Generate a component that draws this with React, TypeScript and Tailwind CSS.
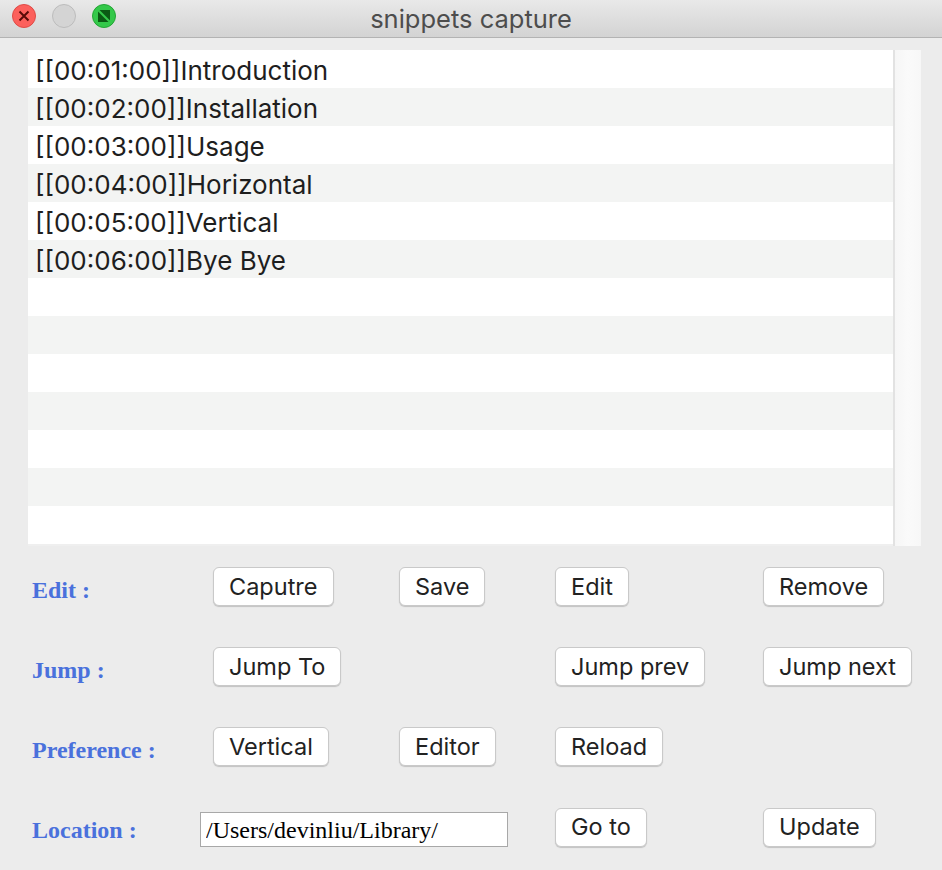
import React from 'react';

const entries = [
  '[[00:01:00]]Introduction',
  '[[00:02:00]]Installation',
  '[[00:03:00]]Usage',
  '[[00:04:00]]Horizontal',
  '[[00:05:00]]Vertical',
  '[[00:06:00]]Bye Bye',
];

const sans = { fontFamily: 'Inter, "Liberation Sans", sans-serif' };
const serif = { fontFamily: '"Liberation Serif", "Times New Roman", serif' };

function MacButton({ label }: { label: string }) {
  return (
    <button
      className="h-[39px] px-[15px] bg-white border border-[#c9c9c9] rounded-[6px] shadow-[0_1px_1px_rgba(0,0,0,0.18)] text-[23.5px] text-[#222] leading-none"
      style={sans}
    >
      {label}
    </button>
  );
}

function Label({ text, width }: { text: string; width: string }) {
  return (
    <div className={`${width} shrink-0 text-[24px] font-bold text-[#4a71dc] leading-none pt-[6px]`} style={serif}>
      {text}
    </div>
  );
}

function TitleBar() {
  return (
    <div className="relative h-[38px] flex items-center justify-center bg-gradient-to-b from-[#e9e9e9] to-[#d3d3d3] border-b border-[#b3b3b3]">
      <div className="absolute left-[12px] top-[4px] flex gap-[16px]">
        <svg width="24" height="24" viewBox="0 0 24 24">
          <circle cx="12" cy="12" r="11.5" fill="#fc605c" stroke="#de4b46" />
          <path d="M7.5 7.5 L16.5 16.5 M16.5 7.5 L7.5 16.5" stroke="#5a0a08" strokeWidth="2" />
        </svg>
        <svg width="24" height="24" viewBox="0 0 24 24">
          <circle cx="12" cy="12" r="11.5" fill="#d4d4d4" stroke="#bcbcbc" />
        </svg>
        <svg width="24" height="24" viewBox="0 0 24 24">
          <circle cx="12" cy="12" r="11.5" fill="#34c84a" stroke="#24a535" />
          <polygon points="7.5,6 18,6 18,16.5" fill="#0b5a14" />
          <polygon points="6,7.5 6,18 16.5,18" fill="#0b5a14" />
        </svg>
      </div>
      <span className="text-[25.5px] text-[#4d4d4d] leading-none" style={sans}>
        snippets capture
      </span>
    </div>
  );
}

export default function App() {
  const rows = Array.from({ length: 13 }, (_, i) => entries[i] ?? '');

  return (
    <div className="w-[942px] h-[870px] bg-[#ececec] overflow-hidden">
      <TitleBar />

      {/* list */}
      <div className="flex mt-[12px] ml-[28px] w-[893px] h-[496px]">
        <div className="w-[865px] flex flex-col border-b-2 border-[#efefef]">
          {rows.map((text, i) => (
            <div
              key={i}
              className={`h-[38px] shrink-0 flex items-center pl-[7px] pt-[3px] text-[26px] text-[#1e1e1e] leading-none ${
                i % 2 === 0 ? 'bg-white' : 'bg-[#f3f4f3]'
              }`}
              style={sans}
            >
              {text}
            </div>
          ))}
        </div>
        <div className="w-[2px] bg-[#e2e2e2]" />
        <div className="w-[26px] bg-gradient-to-r from-[#f6f6f6] via-[#fafafa] to-[#f7f7f7]" />
      </div>

      {/* controls */}
      <div className="pl-[32px] pt-[21px] flex flex-col gap-[41px]">
        <div className="flex items-center">
          <Label text="Edit :" width="w-[181px]" />
          <div className="w-[186px]"><MacButton label="Caputre" /></div>
          <div className="w-[156px]"><MacButton label="Save" /></div>
          <div className="w-[208px]"><MacButton label="Edit" /></div>
          <div><MacButton label="Remove" /></div>
        </div>
        <div className="flex items-center">
          <Label text="Jump :" width="w-[181px]" />
          <div className="w-[342px]"><MacButton label="Jump To" /></div>
          <div className="w-[208px]"><MacButton label="Jump prev" /></div>
          <div><MacButton label="Jump next" /></div>
        </div>
        <div className="flex items-center">
          <Label text="Preference :" width="w-[181px]" />
          <div className="w-[186px]"><MacButton label="Vertical" /></div>
          <div className="w-[156px]"><MacButton label="Editor" /></div>
          <div><MacButton label="Reload" /></div>
        </div>
        <div className="flex items-center">
          <Label text="Location :" width="w-[168px]" />
          <div className="w-[355px] pt-[5px]">
            <input
              readOnly
              value="/Users/devinliu/Library/"
              className="w-[308px] h-[35px] bg-white border border-[#a8a8a8] px-[5px] text-[24px] text-black outline-none"
              style={serif}
            />
          </div>
          <div className="w-[208px]"><MacButton label="Go to" /></div>
          <div><MacButton label="Update" /></div>
        </div>
      </div>
    </div>
  );
}
